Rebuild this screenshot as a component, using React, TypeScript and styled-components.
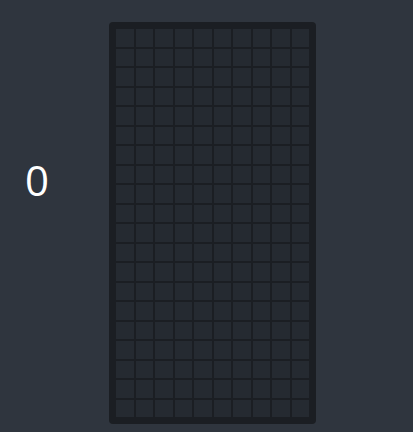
import React from 'react';
import styled, { createGlobalStyle } from 'styled-components';

const COLS = 10;
const ROWS = 20;

const GlobalStyle = createGlobalStyle`
	html, body {
		margin: 0;
		padding: 0;
		background: #2f353e;
	}

	body {
		font-family: 'Open Sans', 'Liberation Sans', sans-serif;
	}
`;

const Page = styled.div`
	display: flex;
	align-items: flex-start;
	width: 413px;
	height: 432px;
	padding-top: 22px;
	box-sizing: border-box;
`;

const ScorePanel = styled.div`
	width: 109px;
	padding-top: 134px;
	padding-left: 25px;
	box-sizing: border-box;
`;

const Score = styled.span`
	font-size: 42px;
	font-weight: 400;
	line-height: 48px;
	color: #ffffff;
`;

const Board = styled.div`
	display: grid;
	grid-template-columns: repeat(${COLS}, 17.5px);
	grid-auto-rows: 17.5px;
	gap: 2px;
	padding: 7px;
	border-radius: 4px;
	background: #1b1e23;
`;

const Cell = styled.div<{ filled?: boolean }>`
	background: ${({ filled }) => (filled ? '#4a90d9' : '#252a31')};
`;

export default function App() {
	const cells = Array.from({ length: COLS * ROWS });

	return (
		<>
			<GlobalStyle />
			<Page>
				<ScorePanel>
					<Score>0</Score>
				</ScorePanel>
				<Board>
					{cells.map((_, i) => (
						<Cell key={i} />
					))}
				</Board>
			</Page>
		</>
	);
}
